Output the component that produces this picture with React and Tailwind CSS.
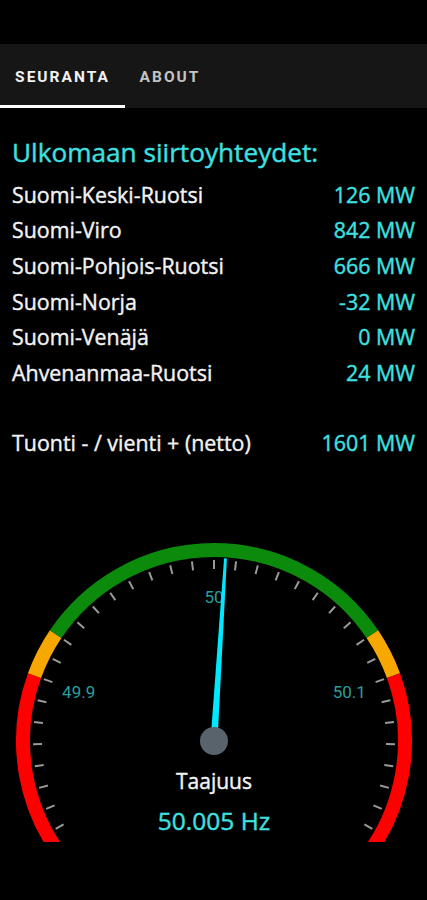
import React from "react";

const rows = [
  ["Suomi-Keski-Ruotsi", "126 MW"],
  ["Suomi-Viro", "842 MW"],
  ["Suomi-Pohjois-Ruotsi", "666 MW"],
  ["Suomi-Norja", "-32 MW"],
  ["Suomi-Venäjä", "0 MW"],
  ["Ahvenanmaa-Ruotsi", "24 MW"],
];

const CX = 214;
const CY = 212;

function pt(a, r) {
  const rad = (a * Math.PI) / 180;
  return [CX + r * Math.sin(rad), CY - r * Math.cos(rad)];
}

function arc(a1, a2, r) {
  const [x1, y1] = pt(a1, r);
  const [x2, y2] = pt(a2, r);
  const large = a2 - a1 > 180 ? 1 : 0;
  return `M ${x1} ${y1} A ${r} ${r} 0 ${large} 1 ${x2} ${y2}`;
}

function Gauge() {
  const ticks = [];
  for (let k = 0; k <= 34; k++) {
    const a = -119 + 7 * k;
    const [x1, y1] = pt(a, 172);
    const [x2, y2] = pt(a, 181);
    ticks.push(
      <line key={k} x1={x1} y1={y1} x2={x2} y2={y2} stroke="#9a9a9a" strokeWidth="2" />
    );
  }
  const na = 3.6;
  const [tx, ty] = pt(na, 183);
  const [b1x, b1y] = pt(na - 90, 3.5);
  const [b2x, b2y] = pt(na + 90, 3.5);
  const [t1x, t1y] = [tx + (b1x - CX) * 0.4, ty + (b1y - CY) * 0.4];
  const [t2x, t2y] = [tx + (b2x - CX) * 0.4, ty + (b2y - CY) * 0.4];
  const [l1x, l1y] = pt(-70, 144);
  const [l2x, l2y] = pt(70, 144);
  const [l0x, l0y] = pt(0, 144);
  return (
    <svg width="427" height="330" viewBox="0 0 427 330" className="block">
      <defs>
        <clipPath id="gclip">
          <rect x="0" y="0" width="427" height="313" />
        </clipPath>
      </defs>
      <g clipPath="url(#gclip)">
        <path d={arc(-130, -70, 191)} stroke="#ff0000" strokeWidth="14" fill="none" />
        <path d={arc(-70, -56, 191)} stroke="#f7a800" strokeWidth="14" fill="none" />
        <path d={arc(-56, 56, 191)} stroke="#0b8a0b" strokeWidth="14" fill="none" />
        <path d={arc(56, 70, 191)} stroke="#f7a800" strokeWidth="14" fill="none" />
        <path d={arc(70, 130, 191)} stroke="#ff0000" strokeWidth="14" fill="none" />
      </g>
      {ticks}
      <g fill="#2a9e9e" fontFamily="Roboto, sans-serif" fontSize="17" textAnchor="middle" dominantBaseline="central">
        <text x={l1x} y={l1y}>49.9</text>
        <text x={l0x} y={l0y}>50</text>
        <text x={l2x} y={l2y}>50.1</text>
      </g>
      <polygon
        points={`${b1x},${b1y} ${t1x},${t1y} ${t2x},${t2y} ${b2x},${b2y}`}
        fill="#00e8ff"
      />
      <circle cx={CX} cy={CY} r="14" fill="#59636b" />
      <text
        x={CX}
        y={252}
        fill="#f2f2f2"
        stroke="#f2f2f2"
        strokeWidth="0.4"
        fontFamily="'Open Sans', sans-serif"
        fontSize="21"
        textAnchor="middle"
        dominantBaseline="central"
      >
        Taajuus
      </text>
      <text
        x={CX}
        y={291}
        fill="#3ee0e0"
        stroke="#3ee0e0"
        strokeWidth="0.4"
        fontFamily="'Open Sans', sans-serif"
        fontSize="24.5"
        textAnchor="middle"
        dominantBaseline="central"
      >
        50.005 Hz
      </text>
    </svg>
  );
}

export default function App() {
  return (
    <div className="w-[427px] h-[900px] bg-black overflow-hidden">
      <div className="h-[44px] bg-black" />
      <div className="h-[64px] bg-[#161616] flex">
        <div className="w-[125px] h-full flex items-center justify-center border-b-[3px] border-white pt-[6px] font-['Roboto',sans-serif] font-bold text-[15.5px] tracking-[2px] text-[#f2f2f2]">
          SEURANTA
        </div>
        <div className="w-[90px] h-full flex items-center justify-center pt-[3px] font-['Roboto',sans-serif] font-bold text-[15.5px] tracking-[2px] text-[#c4c4c4]">
          ABOUT
        </div>
      </div>
      <div className="px-3 font-['Open_Sans',sans-serif] [-webkit-text-stroke:0.4px_currentColor]">
        <div className="mt-[28px] h-[32px] leading-[32px] text-[26.2px] text-[#3ee0e0]">
          Ulkomaan siirtoyhteydet:
        </div>
        <div className="mt-[9px]">
          {rows.map(([k, v]) => (
            <div key={k} className="h-[35.6px] flex items-center justify-between text-[21.4px] text-[#f2f2f2]">
              <span>{k}</span>
              <span className="text-[#3ee0e0]">{v}</span>
            </div>
          ))}
        </div>
        <div className="mt-[35px] h-[35.6px] flex items-center justify-between text-[21.4px] text-[#f2f2f2]">
          <span>Tuonti - / vienti + (netto)</span>
          <span className="text-[#3ee0e0]">1601 MW</span>
        </div>
      </div>
      <div className="mt-[68px]">
        <Gauge />
      </div>
    </div>
  );
}
